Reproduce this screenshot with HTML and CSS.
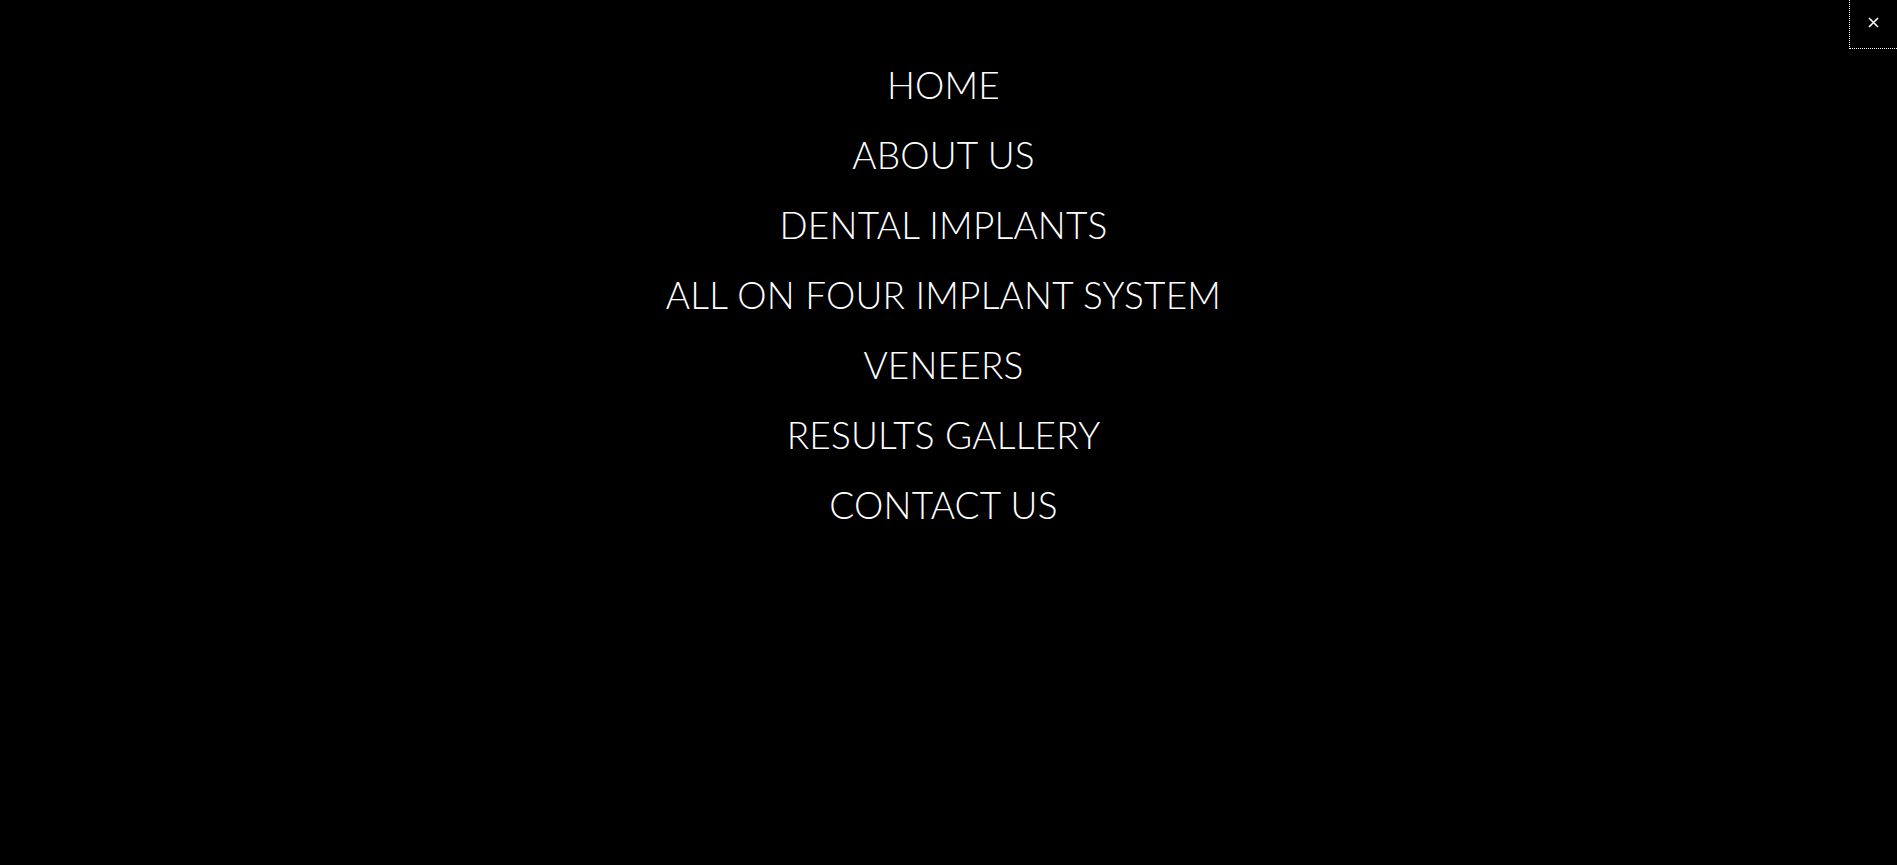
FILE: index.html
```html
<!DOCTYPE html>
<html>
<head>
<meta charset="utf-8">
<link rel="stylesheet" href="styles.css">
</head>
<body>
<div class="overlay">
  <button class="close" aria-label="Close"><svg class="close-icon" width="11" height="11" viewBox="0 0 11 11"><path d="M1 1L10 10M10 1L1 10" stroke="#fff" stroke-width="1.6" fill="none"/></svg></button>
  <nav class="menu">
    <a href="#">HOME</a>
    <a href="#">ABOUT US</a>
    <a href="#">DENTAL IMPLANTS</a>
    <a href="#">ALL ON FOUR IMPLANT SYSTEM</a>
    <a href="#">VENEERS</a>
    <a href="#">RESULTS GALLERY</a>
    <a href="#">CONTACT US</a>
  </nav>
</div>
</body>
</html>
```
FILE: styles.css
```css
html, body {
  margin: 0;
  padding: 0;
  background: #000;
  height: 100%;
}
.overlay {
  min-height: 100%;
  background: #000;
}
.close {
  position: absolute;
  top: -1px;
  right: 0;
  width: 48px;
  height: 50px;
  background: transparent;
  border: 1px dotted #fff;
  border-right: none;
  padding: 0;
  display: flex;
  align-items: center;
  justify-content: center;
  cursor: pointer;
}
.close-icon {
  margin-bottom: 3px;
}
.menu {
  display: flex;
  flex-direction: column;
  align-items: center;
  padding-top: 50px;
  padding-right: 10px;
}
.menu a {
  display: block;
  color: #fff;
  text-decoration: none;
  font-family: "Lato", sans-serif;
  font-weight: 300;
  font-size: 37px;
  letter-spacing: 0.2px;
  line-height: 70px;
}
```
